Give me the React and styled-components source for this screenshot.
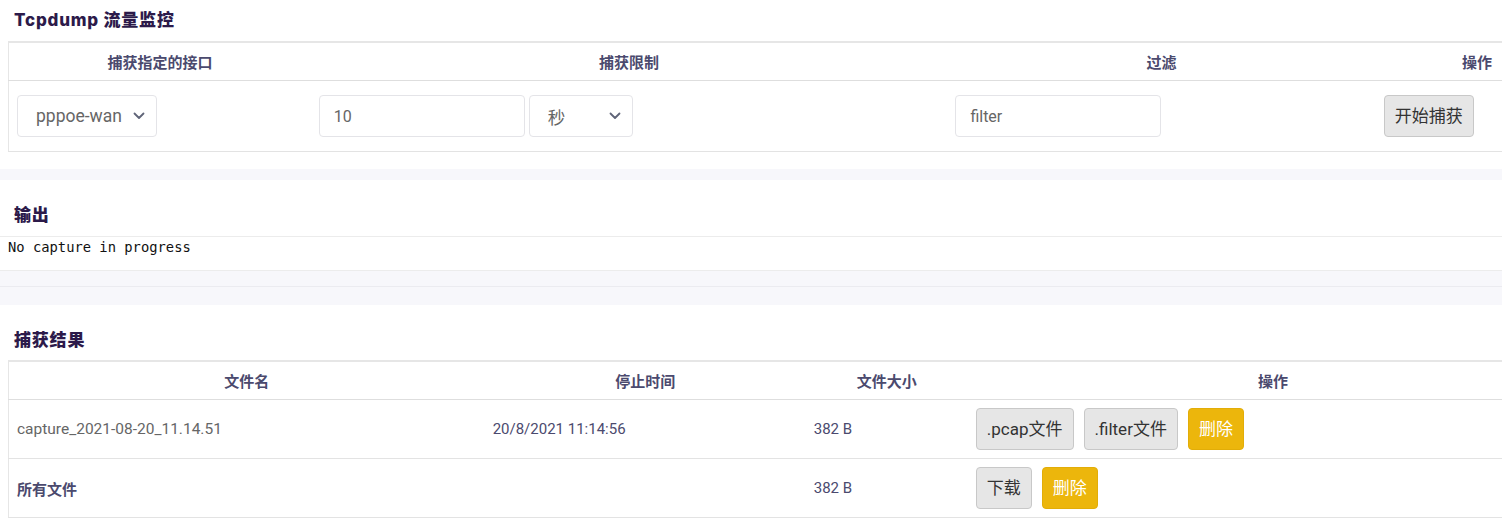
import React from 'react';
import styled, { createGlobalStyle } from 'styled-components';

const GlobalStyle = createGlobalStyle`
    html, body {
        margin: 0;
        padding: 0;
        overflow: hidden;
        background: #f7f7fb;
    }
    body {
        font-family: Roboto, "Noto Sans CJK SC", sans-serif;
    }
`;

const Page = styled.div`
    width: 1502px;
    min-height: 522px;
    overflow: hidden;
    background: #f7f7fb;
`;

const Section = styled.section`
    background: #ffffff;
    padding: ${p => p.$pad || '25px 0 0 0'};
`;

const Title = styled.h3`
    margin: 0 0 ${p => p.$gap || '11px'} 14px;
    font-family: Inter, "Noto Sans CJK SC", sans-serif;
    font-size: 17px;
    font-weight: 800;
    letter-spacing: 0.8px;
    line-height: 20px;
    color: #2c1a4a;
`;

const Table = styled.table`
    width: 1570px;
    min-width: 1570px;
    margin-left: 8px;
    border-collapse: collapse;
    table-layout: fixed;
    border-left: 1px solid #e6e6e6;
    border-top: 2px solid #e6e6e6;

    th {
        height: 37px;
        padding: 0 8px;
        font-family: "Noto Sans CJK SC", sans-serif;
        font-size: 15px;
        font-weight: 700;
        color: #4b4a6e;
        text-align: center;
        border-bottom: 1px solid #dedede;
    }

    td {
        padding: 0 8px;
        font-size: 15px;
        color: #666;
        border-bottom: 1px solid #e3e3e3;
        text-align: left;
    }
`;

const Row = styled.tr`
    height: ${p => p.$h}px;
`;

const Cell = styled.td`
    && {
        color: ${p => (p.$dark ? '#4b4a6e' : '#666')};
        font-size: ${p => p.$size || 15}px;
        font-weight: ${p => (p.$bold ? 700 : 400)};
        font-family: ${p => (p.$bold ? '"Noto Sans CJK SC", sans-serif' : 'Roboto, "Noto Sans CJK SC", sans-serif')};
    }
`;

const Inline = styled.div`
    display: flex;
    align-items: center;
    gap: ${p => p.$gap || 4}px;
`;

const SelectBox = styled.div`
    box-sizing: border-box;
    width: ${p => p.$w}px;
    height: 42px;
    display: flex;
    align-items: center;
    justify-content: space-between;
    padding: 0 11px 0 18px;
    border: 1px solid #e4e4e8;
    border-radius: 4px;
    background: #fff;
    font-family: Roboto, "Noto Sans CJK SC", sans-serif;
    font-size: 17.5px;
    color: #666;
`;

const TextInput = styled.div`
    box-sizing: border-box;
    width: 206px;
    height: 42px;
    display: flex;
    align-items: center;
    padding: 0 14px;
    border: 1px solid #e4e4e8;
    border-radius: 4px;
    background: #fff;
    font-size: 16px;
    color: #666;
`;

const Button = styled.button`
    box-sizing: border-box;
    height: 42px;
    padding: 0 10px;
    border-radius: 4px;
    border: 1px solid ${p => (p.$warn ? '#e2ad08' : '#c8c8c8')};
    background: ${p => (p.$warn ? '#ecb60c' : '#e6e6e6')};
    color: ${p => (p.$warn ? '#ffffff' : '#333333')};
    font-family: Roboto, "Noto Sans CJK SC", sans-serif;
    font-size: 17px;
    line-height: 1;
`;

const Output = styled.pre`
    margin: 0;
    height: 35px;
    padding: 2px 0 0 8px;
    box-sizing: border-box;
    border-top: 1px solid #ececec;
    border-bottom: 1px solid #ececec;
    font-family: "DejaVu Sans Mono", monospace;
    font-size: 13.8px;
    line-height: 17px;
    color: #111;
`;

const Spacer = styled.div`
    height: ${p => p.$h}px;
    border-bottom: ${p => (p.$line ? '1px solid #ebebf0' : 'none')};
`;

const Chevron = () => (
    <svg width="12" height="8" viewBox="0 0 12 8" fill="none">
        <polyline points="1.5,1.5 6,6 10.5,1.5" stroke="#5f6478" strokeWidth="1.8" strokeLinecap="round" strokeLinejoin="round" />
    </svg>
);

const Select = ({ w, value }) => (
    <SelectBox $w={w}>
        <span>{value}</span>
        <Chevron />
    </SelectBox>
);

const files = [
    { name: 'capture_2021-08-20_11.14.51', time: '20/8/2021 11:14:56', size: '382 B' },
];

const App = () => {
    return (
        <Page>
            <GlobalStyle />

            <Section $pad="10px 0 17px 0">
                <Title>Tcpdump 流量监控</Title>
                <Table>
                    <colgroup>
                        <col style={{ width: 302 }} />
                        <col style={{ width: 636 }} />
                        <col style={{ width: 428 }} />
                        <col style={{ width: 202 }} />
                    </colgroup>
                    <thead>
                        <tr>
                            <th>捕获指定的接口</th>
                            <th>捕获限制</th>
                            <th>过滤</th>
                            <th>操作</th>
                        </tr>
                    </thead>
                    <tbody>
                        <Row $h={71}>
                            <td>
                                <Select w={140} value="pppoe-wan" />
                            </td>
                            <td>
                                <Inline>
                                    <TextInput>10</TextInput>
                                    <Select w={104} value="秒" />
                                </Inline>
                            </td>
                            <td>
                                <TextInput>filter</TextInput>
                            </td>
                            <td>
                                <Button>开始捕获</Button>
                            </td>
                        </Row>
                    </tbody>
                </Table>
            </Section>

            <Spacer $h={11} />

            <Section>
                <Title>输出</Title>
                <Output>No capture in progress</Output>
            </Section>

            <Spacer $h={15} $line />
            <Spacer $h={18} />

            <Section $pad="25px 0 4px 0">
                <Title $gap="10px">捕获结果</Title>
                <Table>
                    <colgroup>
                        <col style={{ width: 476 }} />
                        <col style={{ width: 321 }} />
                        <col style={{ width: 162 }} />
                        <col style={{ width: 610 }} />
                    </colgroup>
                    <thead>
                        <tr>
                            <th>文件名</th>
                            <th>停止时间</th>
                            <th>文件大小</th>
                            <th>操作</th>
                        </tr>
                    </thead>
                    <tbody>
                        {files.map(f => (
                            <Row $h={59} key={f.name}>
                                <Cell $size={15.5}>{f.name}</Cell>
                                <Cell $dark>{f.time}</Cell>
                                <Cell $dark>{f.size}</Cell>
                                <td>
                                    <Inline $gap={10}>
                                        <Button>.pcap文件</Button>
                                        <Button>.filter文件</Button>
                                        <Button $warn>删除</Button>
                                    </Inline>
                                </td>
                            </Row>
                        ))}
                        <Row $h={59}>
                            <Cell $dark $bold>所有文件</Cell>
                            <Cell />
                            <Cell $dark>382 B</Cell>
                            <td>
                                <Inline $gap={10}>
                                    <Button>下载</Button>
                                    <Button $warn>删除</Button>
                                </Inline>
                            </td>
                        </Row>
                    </tbody>
                </Table>
            </Section>
        </Page>
    );
};

export default App;
